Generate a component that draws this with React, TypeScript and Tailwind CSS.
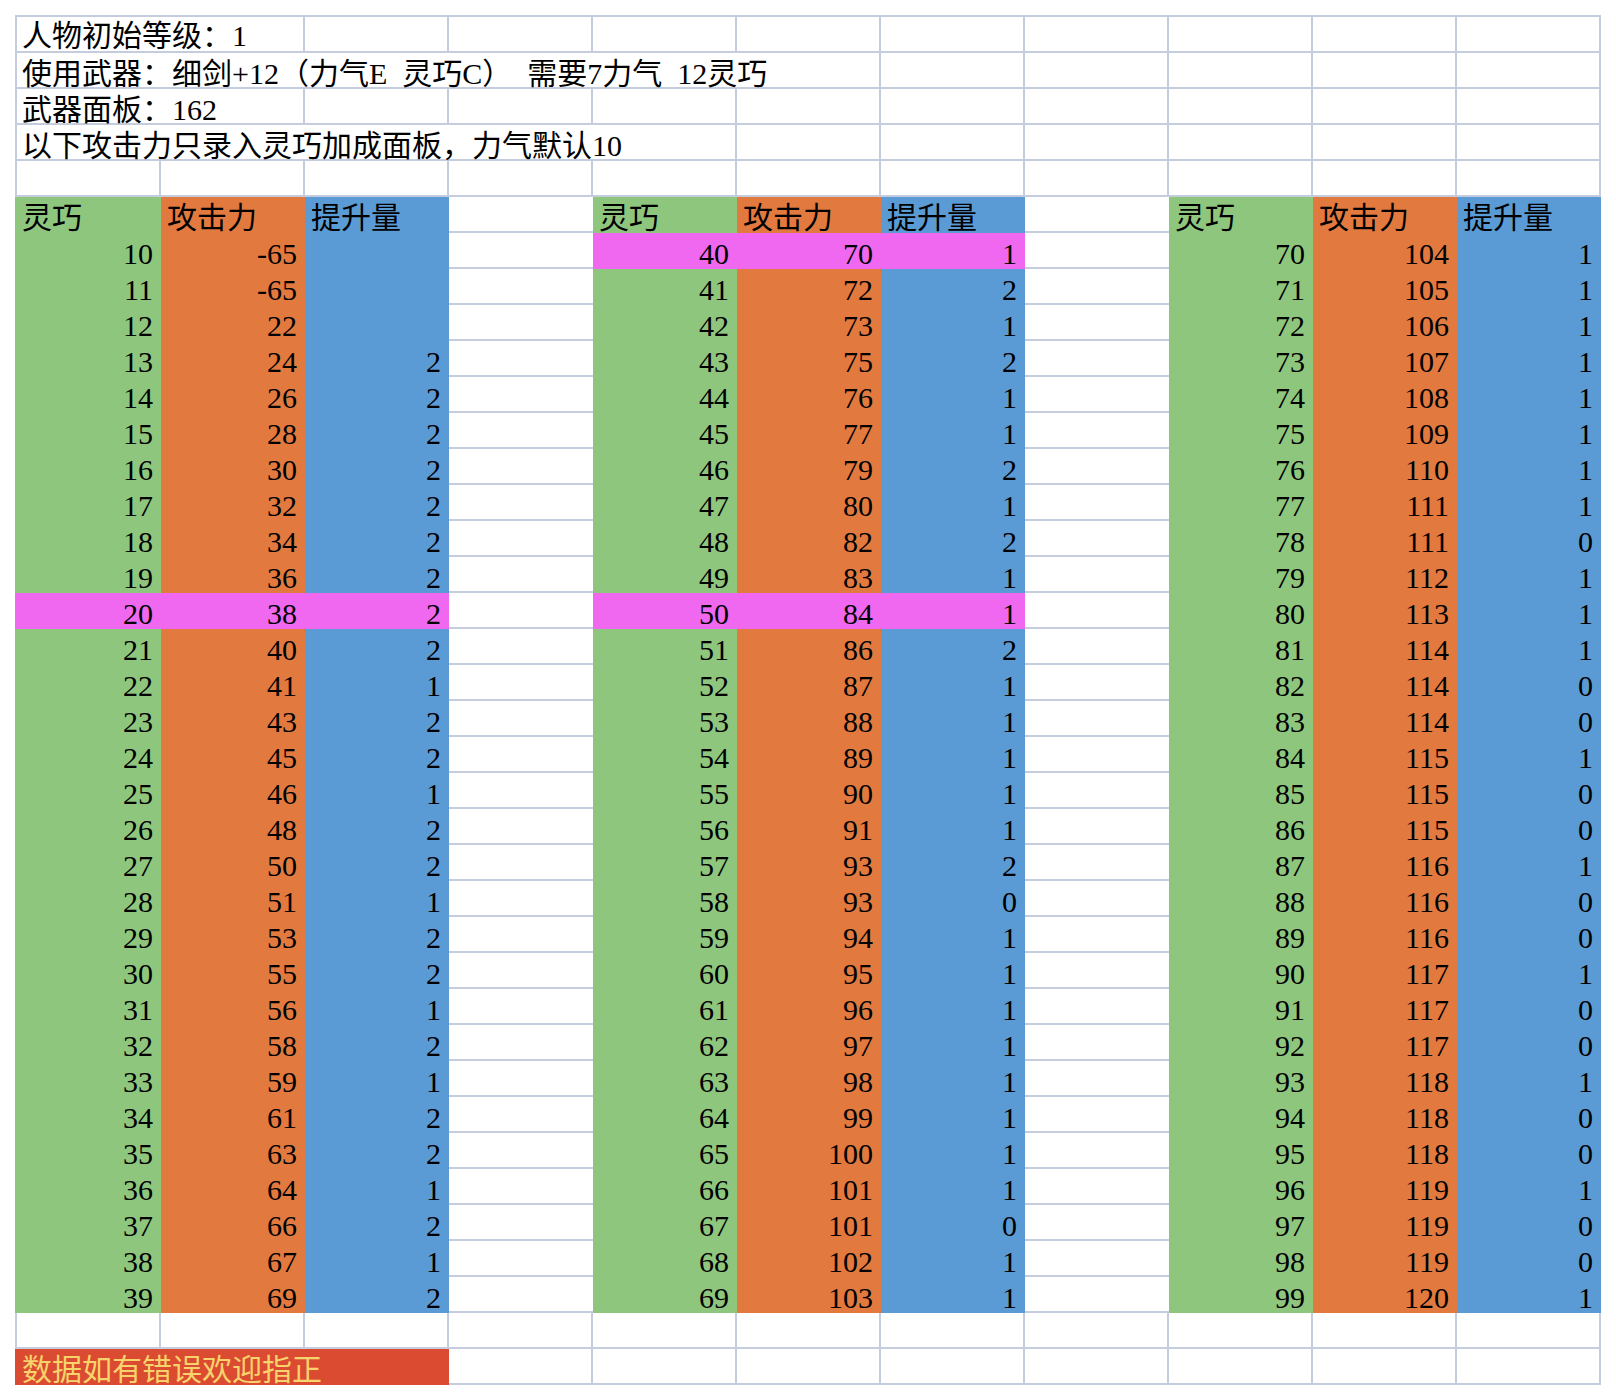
import type { ReactNode } from 'react';
import clsx from 'clsx';

type Fill = 'green' | 'orange' | 'blue' | 'pink' | 'red';

const FILL: Record<Fill, string> = {
  green: 'bg-[#8fc67e]',
  orange: 'bg-[#e2793f]',
  blue: 'bg-[#5b9bd5]',
  pink: 'bg-[#ef68ef]',
  red: 'bg-[#db4b32] text-[#f7d46b]',
};

const SPAN: Record<number, string> = {
  1: '',
  2: 'col-span-2',
  3: 'col-span-3',
  5: 'col-span-5',
  6: 'col-span-6',
};

// [灵巧, 攻击力, 提升量]
const table1: [number, number, number | null][] = [
  [10, -65, null], [11, -65, null], [12, 22, null], [13, 24, 2], [14, 26, 2],
  [15, 28, 2], [16, 30, 2], [17, 32, 2], [18, 34, 2], [19, 36, 2],
  [20, 38, 2], [21, 40, 2], [22, 41, 1], [23, 43, 2], [24, 45, 2],
  [25, 46, 1], [26, 48, 2], [27, 50, 2], [28, 51, 1], [29, 53, 2],
  [30, 55, 2], [31, 56, 1], [32, 58, 2], [33, 59, 1], [34, 61, 2],
  [35, 63, 2], [36, 64, 1], [37, 66, 2], [38, 67, 1], [39, 69, 2],
];

const table2: [number, number, number | null][] = [
  [40, 70, 1], [41, 72, 2], [42, 73, 1], [43, 75, 2], [44, 76, 1],
  [45, 77, 1], [46, 79, 2], [47, 80, 1], [48, 82, 2], [49, 83, 1],
  [50, 84, 1], [51, 86, 2], [52, 87, 1], [53, 88, 1], [54, 89, 1],
  [55, 90, 1], [56, 91, 1], [57, 93, 2], [58, 93, 0], [59, 94, 1],
  [60, 95, 1], [61, 96, 1], [62, 97, 1], [63, 98, 1], [64, 99, 1],
  [65, 100, 1], [66, 101, 1], [67, 101, 0], [68, 102, 1], [69, 103, 1],
];

const table3: [number, number, number | null][] = [
  [70, 104, 1], [71, 105, 1], [72, 106, 1], [73, 107, 1], [74, 108, 1],
  [75, 109, 1], [76, 110, 1], [77, 111, 1], [78, 111, 0], [79, 112, 1],
  [80, 113, 1], [81, 114, 1], [82, 114, 0], [83, 114, 0], [84, 115, 1],
  [85, 115, 0], [86, 115, 0], [87, 116, 1], [88, 116, 0], [89, 116, 0],
  [90, 117, 1], [91, 117, 0], [92, 117, 0], [93, 118, 1], [94, 118, 0],
  [95, 118, 0], [96, 119, 1], [97, 119, 0], [98, 119, 0], [99, 120, 1],
];

const highlighted = new Set([20, 40, 50]);

function Cell({
  row,
  col,
  span = 1,
  fill,
  right,
  noRight,
  children,
}: {
  row: number;
  col: number;
  span?: number;
  fill?: Fill;
  right?: boolean;
  noRight?: boolean;
  children?: ReactNode;
}) {
  const white = !fill;
  return (
    <div
      className={clsx(
        'whitespace-pre leading-[30px]',
        row === 0 ? 'pt-[4px]' : 'pt-[6px]',
        right ? 'text-right pr-[8px]' : col === 0 ? (white ? 'pl-[5px]' : 'pl-[7px]') : 'pl-[6px]',
        white ? 'border-[#c5ccdd] border-b-2' : FILL[fill],
        white && !noRight && 'border-r-2',
        white && row === 0 && 'border-t-2',
        white && col === 0 && 'border-l-2',
        SPAN[span],
      )}
    >
      {children}
    </div>
  );
}

function blanks(row: number, from: number, noRightCols: number[] = []) {
  const out = [];
  for (let c = from; c < 11; c++) {
    out.push(<Cell key={`${row}-${c}`} row={row} col={c} noRight={noRightCols.includes(c)} />);
  }
  return out;
}

export default function App() {
  const cells: ReactNode[] = [];

  const info: [string, number][] = [
    ['人物初始等级：1', 2],
    ['使用武器：细剑+12（力气E  灵巧C）  需要7力气  12灵巧', 6],
    ['武器面板：162', 2],
    ['以下攻击力只录入灵巧加成面板，力气默认10', 5],
  ];
  info.forEach(([text, span], r) => {
    cells.push(
      <Cell key={`${r}-0`} row={r} col={0} span={span}>
        {text}
      </Cell>,
    );
    cells.push(...blanks(r, span));
  });

  cells.push(...blanks(4, 0));

  // header row
  [0, 4, 8].forEach((c) => {
    cells.push(
      <Cell key={`5-${c}`} row={5} col={c} fill="green">灵巧</Cell>,
      <Cell key={`5-${c + 1}`} row={5} col={c + 1} fill="orange">攻击力</Cell>,
      <Cell key={`5-${c + 2}`} row={5} col={c + 2} fill="blue">提升量</Cell>,
    );
    if (c < 8) cells.push(<Cell key={`5-${c + 3}`} row={5} col={c + 3} noRight />);
  });

  for (let i = 0; i < 30; i++) {
    const r = 6 + i;
    [table1, table2, table3].forEach((t, ti) => {
      const [lq, atk, up] = t[i];
      const pink = highlighted.has(lq);
      const c = ti * 4;
      cells.push(
        <Cell key={`${r}-${c}`} row={r} col={c} fill={pink ? 'pink' : 'green'} right>{lq}</Cell>,
        <Cell key={`${r}-${c + 1}`} row={r} col={c + 1} fill={pink ? 'pink' : 'orange'} right>{atk}</Cell>,
        <Cell key={`${r}-${c + 2}`} row={r} col={c + 2} fill={pink ? 'pink' : 'blue'} right>{up ?? ''}</Cell>,
      );
      if (ti < 2) cells.push(<Cell key={`${r}-${c + 3}`} row={r} col={c + 3} noRight />);
    });
  }

  cells.push(...blanks(36, 0));

  cells.push(
    <Cell key="37-0" row={37} col={0} span={3} fill="red">
      数据如有错误欢迎指正
    </Cell>,
  );
  cells.push(...blanks(37, 3));

  return (
    <div className="min-h-[1400px] bg-white pl-[15px] pt-[15px] text-black text-[30px] font-['Liberation_Serif','Noto_Sans_CJK_SC',serif]">
      <div className="grid grid-cols-[146px_repeat(10,144px)] grid-rows-[38px_repeat(37,36px)] w-max">
        {cells}
      </div>
    </div>
  );
}
